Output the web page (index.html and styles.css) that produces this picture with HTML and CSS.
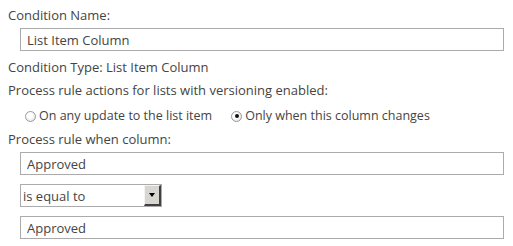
FILE: index.html
```html
<!DOCTYPE html>
<html lang="en">
<head>
    <meta charset="UTF-8">
    <title>Condition</title>
    <link rel="stylesheet" href="styles.css">
</head>
<body>
    <form class="condition-form">
        <label class="field-label" for="conditionName">Condition Name:</label>
        <input class="text-box name-box" type="text" id="conditionName" value="List Item Column">

        <div class="field-label type-label">Condition Type: List Item Column</div>

        <div class="field-label actions-label">Process rule actions for lists with versioning enabled:</div>
        <div class="radio-row">
            <label class="radio-option">
                <span class="radio"></span>
                On any update to the list item
            </label>
            <label class="radio-option">
                <span class="radio checked"></span>
                Only when this column changes
            </label>
        </div>

        <div class="field-label column-label">Process rule when column:</div>
        <input class="text-box" type="text" value="Approved">

        <div class="dropdown">
            <span class="dropdown-text">is equal to</span>
            <span class="dropdown-btn"><span class="arrow"></span></span>
        </div>

        <input class="text-box" type="text" value="Approved">
    </form>
</body>
</html>
```

FILE: styles.css
```css
body {
    margin: 0;
    background: #ffffff;
    font-family: "Open Sans", "Noto Sans", sans-serif;
    font-size: 13px;
    color: #444444;
}
.condition-form {
    display: flex;
    flex-direction: column;
    align-items: flex-start;
    padding: 7px 8px 0 8px;
}
.field-label {
    display: block;
    line-height: 16px;
}
.text-box {
    box-sizing: border-box;
    width: 484px;
    height: 23px;
    margin: 5px 0 0 12px;
    padding: 0 6px;
    border: 1px solid #ababab;
    font-family: inherit;
    font-size: 13px;
    color: #444444;
    background: #ffffff;
}
.type-label {
    margin-top: 8px;
}
.actions-label {
    margin-top: 7px;
}
.radio-row {
    display: flex;
    gap: 19px;
    margin: 10px 0 0 17px;
    font-size: 12.5px;
    line-height: 16px;
}
.radio-option {
    display: flex;
    align-items: center;
    gap: 3px;
}
.radio {
    position: relative;
    box-sizing: border-box;
    width: 11px;
    height: 11px;
    border-radius: 50%;
    border: 1px solid #999999;
    background: radial-gradient(circle at 40% 40%, #ffffff 35%, #d6d6d6 100%);
}
.radio.checked::after {
    content: "";
    position: absolute;
    left: 2.5px;
    top: 2.5px;
    width: 4px;
    height: 4px;
    border-radius: 50%;
    background: #111111;
}
.column-label {
    margin-top: 7px;
}
.dropdown {
    box-sizing: border-box;
    display: flex;
    align-items: center;
    justify-content: space-between;
    width: 142px;
    height: 23px;
    margin: 9px 0 0 12px;
    border: 1px solid #ababab;
    background: #ffffff;
}
.dropdown-text {
    padding-left: 2px;
    font-size: 13px;
}
.dropdown-btn {
    box-sizing: border-box;
    display: flex;
    align-items: center;
    justify-content: center;
    width: 17px;
    height: 21px;
    background: #d8d6d0;
    border-top: 1px solid #f4f4f4;
    border-left: 1px solid #f4f4f4;
    border-right: 2px solid #404040;
    border-bottom: 2px solid #404040;
}
.arrow {
    width: 0;
    height: 0;
    border-left: 3px solid transparent;
    border-right: 3px solid transparent;
    border-top: 4px solid #000000;
}
.dropdown + .text-box {
    margin-top: 9px;
}
```
